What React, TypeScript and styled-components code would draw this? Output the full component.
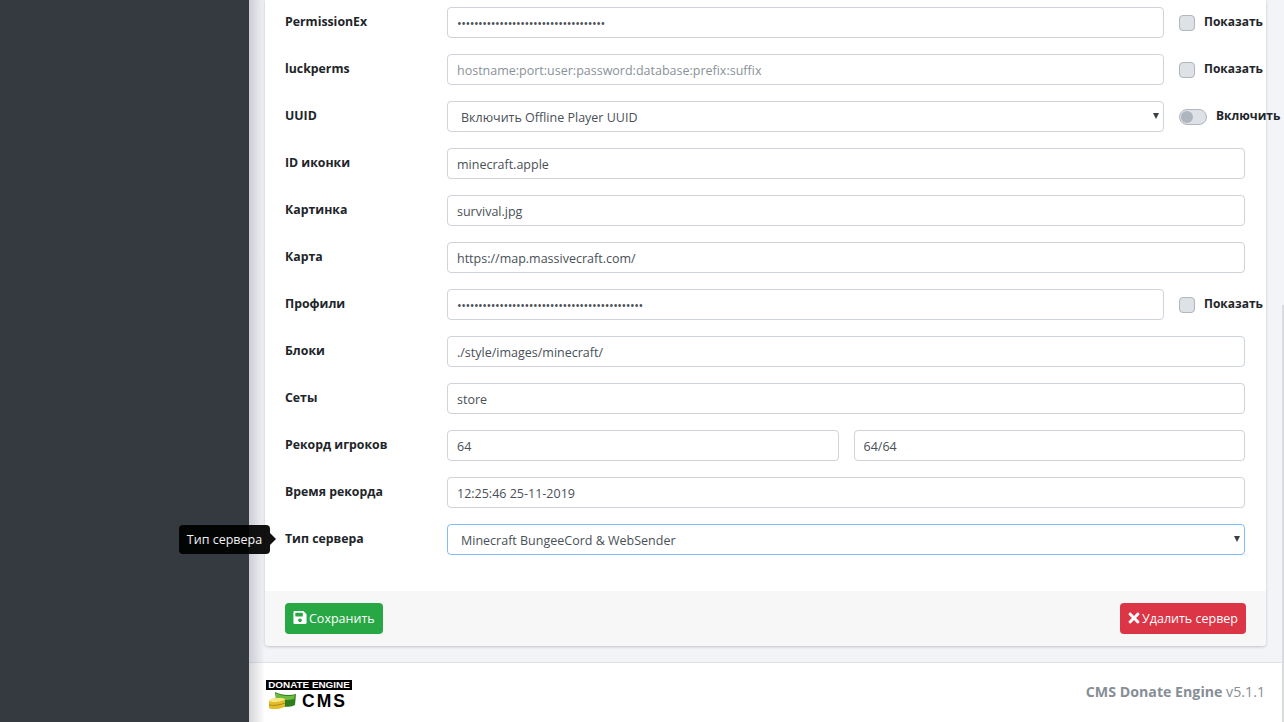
import React from "react";
import styled, { createGlobalStyle } from "styled-components";
import { FaSave, FaTimes } from "react-icons/fa";

const Global = createGlobalStyle`
  html, body { margin: 0; padding: 0; height: 100%; overflow: hidden; background: #f3f4f8; }
  * { box-sizing: border-box; }
  body { font-family: "Open Sans", "Noto Sans", sans-serif; font-size: 13px; color: #212529; }
`;

const Shell = styled.div`
  display: flex;
  width: 1284px;
  height: 722px;
  overflow: hidden;
  position: relative;
`;
const Sidebar = styled.aside`
  width: 249px;
  flex: none;
  background: #343a40;
`;
const Main = styled.main`
  flex: 1;
  min-width: 0;
  display: flex;
  flex-direction: column;
  position: relative;
  &::before {
    content: "";
    position: absolute;
    left: 0;
    top: 0;
    bottom: 0;
    width: 16px;
    background: linear-gradient(90deg, rgba(120, 125, 135, 0.32), rgba(120, 125, 135, 0));
    pointer-events: none;
    z-index: 1;
  }
`;
const ScrollThumb = styled.div`
  position: absolute;
  right: 0;
  top: 305px;
  bottom: 0;
  width: 2px;
  background: #d9dbe0;
  z-index: 2;
`;
const Content = styled.div`
  flex: 1;
  padding: 0 18px 16px 16px;
`;
const Card = styled.section`
  height: 646px;
  background: #fff;
  border-radius: 0 0 4px 4px;
  box-shadow: 0 1px 3px rgba(60, 65, 80, 0.28);
  display: flex;
  flex-direction: column;
`;
const CardBody = styled.div`
  flex: 1;
  padding: 7px 21px 0 20px;
  display: flex;
  flex-direction: column;
  gap: 16px;
`;
const Row = styled.div`
  display: flex;
  height: 31px;
  align-items: flex-start;
`;
const Label = styled.label`
  position: relative;
  width: 162px;
  flex: none;
  font-weight: 700;
  font-size: 12.3px;
  line-height: 18px;
  padding-top: 6px;
  color: #212529;
`;
const Fields = styled.div`
  flex: 1;
  min-width: 0;
  display: flex;
  gap: 15px;
`;
const Input = styled.input`
  flex: 1;
  min-width: 0;
  height: 31px;
  padding: 2px 9px 0;
  border: 1px solid #ced4da;
  border-radius: 4px;
  background: #fff;
  color: #495057;
  font-family: inherit;
  font-size: 12.5px;
  outline: none;
  &::placeholder { color: #8a9299; opacity: 1; }
  &[type="password"] { letter-spacing: -0.48px; }
`;
const SelectWrap = styled.div`
  flex: 1;
  min-width: 0;
  display: flex;
  position: relative;
  &::after {
    content: "";
    position: absolute;
    right: 5px;
    top: 12px;
    border-top: 6px solid #3a3f44;
    border-left: 3px solid transparent;
    border-right: 3px solid transparent;
    pointer-events: none;
  }
`;
const Select = styled.select<{ $focused?: boolean }>`
  flex: 1;
  min-width: 0;
  height: 31px;
  padding: 2px 20px 0 13px;
  border: 1px solid ${(p) => (p.$focused ? "#80bdff" : "#ced4da")};
  border-radius: 4px;
  background: #fff;
  color: #495057;
  font-family: inherit;
  font-size: 12.5px;
  outline: none;
  appearance: none;
`;
const Side = styled.div`
  width: 81px;
  flex: none;
  padding-left: 15px;
  height: 31px;
  display: flex;
  align-items: center;
  white-space: nowrap;
  font-weight: 700;
  font-size: 12px;
  color: #212529;
`;
const CheckBox = styled.span`
  width: 16px;
  height: 16px;
  flex: none;
  margin-right: 9px;
  border: 1px solid #adb5bd;
  border-radius: 4px;
  background: #dee2e6;
`;
const SideText = styled.span`
  margin-top: -3px;
`;
const Switch = styled.span`
  width: 28px;
  height: 16px;
  flex: none;
  margin-right: 9px;
  margin-top: 1px;
  border: 1px solid #adb5bd;
  border-radius: 8px;
  background: #dee2e6;
  padding: 1px;
`;
const Knob = styled.span`
  display: block;
  width: 12px;
  height: 12px;
  border-radius: 50%;
  background: #adb5bd;
`;
const Tooltip = styled.div`
  position: absolute;
  right: calc(100% + 15px);
  top: 1px;
  height: 29px;
  width: 91px;
  display: flex;
  align-items: center;
  justify-content: center;
  background: #000;
  border-radius: 4px;
  color: #fff;
  font-weight: 400;
  font-size: 12.5px;
  white-space: nowrap;
  opacity: 0.93;
  z-index: 3;
  &::after {
    content: "";
    position: absolute;
    left: 100%;
    top: 8px;
    border-left: 6px solid #000;
    border-top: 6px solid transparent;
    border-bottom: 6px solid transparent;
  }
`;
const CardFooter = styled.div`
  height: 55px;
  flex: none;
  padding: 12px 20px 0;
  background: #f7f7f7;
  border-radius: 0 0 4px 4px;
  display: flex;
  justify-content: space-between;
  align-items: flex-start;
`;
const Button = styled.button<{ $tone: string }>`
  height: 31px;
  display: inline-flex;
  align-items: center;
  gap: 2px;
  padding: 0 8px;
  border: 0;
  border-radius: 4px;
  background: ${(p) => p.$tone};
  color: #fff;
  font-family: inherit;
  font-size: 12.5px;
`;
const SaveIcon = styled(FaSave)`
  width: 14px;
  height: 15px;
  margin-top: -2px;
`;
const CloseIcon = styled(FaTimes)`
  width: 12px;
  height: 16px;
  margin-top: -2px;
`;
const Footer = styled.footer`
  height: 60px;
  flex: none;
  background: #fff;
  border-top: 1px solid #dfe1e6;
  padding: 0 19px 0 17px;
  display: flex;
  justify-content: space-between;
  align-items: center;
`;
const Logo = styled.div`
  width: 88px;
  margin-top: 4px;
  display: flex;
  flex-direction: column;
`;
const LogoBar = styled.div`
  height: 10px;
  width: 86px;
  background: #000;
  color: #fff;
  font-family: "Liberation Sans", sans-serif;
  font-weight: 700;
  font-size: 9.9px;
  line-height: 10px;
  text-align: center;
  white-space: nowrap;
`;
const LogoRow = styled.div`
  display: flex;
  align-items: flex-start;
  margin-top: 2px;
  padding-left: 3px;
`;
const LogoText = styled.span`
  font-family: "Liberation Sans", sans-serif;
  font-weight: 700;
  font-size: 17.5px;
  line-height: 18px;
  letter-spacing: 2px;
  color: #000;
  margin-left: 6px;
`;
const Credit = styled.div`
  color: #868e96;
  font-size: 14.2px;
  margin-top: -2px;
  strong { font-weight: 700; }
`;

const MoneyIcon = () => (
  <svg width="27" height="17" viewBox="0 0 27 17" aria-hidden="true">
    <path d="M6 0 C12 3 20 4 27 2 L26 13 C20 16 14 14 8 15 Z" fill="#2f7d1e" />
    <path d="M7 1 C12 4 20 5 26 3 L25 7 C19 9 12 8 7 6 Z" fill="#6dbb3f" />
    <path d="M0 9 C2 6 12 5 16 7 L16 14 C14 17 3 18 0 16 Z" fill="#e4bd2b" />
    <path d="M0 9 C2 6 12 5 16 7 C13 10 3 11 0 9 Z" fill="#f7e684" />
    <path d="M0 13 C5 14 11 13 16 11" stroke="#a08012" strokeWidth="0.8" fill="none" />
  </svg>
);

type Field = {
  label: string;
  value?: string;
  placeholder?: string;
  password?: boolean;
  show?: boolean;
};

const before: Field[] = [
  { label: "PermissionEx", value: "x".repeat(35), password: true, show: true },
  { label: "luckperms", placeholder: "hostname:port:user:password:database:prefix:suffix", show: true },
];
const middle: Field[] = [
  { label: "ID иконки", value: "minecraft.apple" },
  { label: "Картинка", value: "survival.jpg" },
  { label: "Карта", value: "https://map.massivecraft.com/" },
  { label: "Профили", value: "x".repeat(44), password: true, show: true },
  { label: "Блоки", value: "./style/images/minecraft/" },
  { label: "Сеты", value: "store" },
];

const FieldRow = ({ f }: { f: Field }) => (
  <Row>
    <Label>{f.label}</Label>
    <Fields>
      <Input
        type={f.password ? "password" : "text"}
        defaultValue={f.value}
        placeholder={f.placeholder}
        readOnly
      />
    </Fields>
    {f.show && (
      <Side>
        <CheckBox />
        <SideText>Показать</SideText>
      </Side>
    )}
  </Row>
);

export default function App() {
  return (
    <Shell>
      <Global />
      <Sidebar />
      <Main>
        <Content>
          <Card>
            <CardBody>
              {before.map((f) => (
                <FieldRow key={f.label} f={f} />
              ))}
              <Row>
                <Label>UUID</Label>
                <Fields>
                  <SelectWrap>
                    <Select defaultValue="off">
                      <option value="off">Включить Offline Player UUID</option>
                    </Select>
                  </SelectWrap>
                </Fields>
                <Side>
                  <Switch>
                    <Knob />
                  </Switch>
                  <SideText>Включить</SideText>
                </Side>
              </Row>
              {middle.map((f) => (
                <FieldRow key={f.label} f={f} />
              ))}
              <Row>
                <Label>Рекорд игроков</Label>
                <Fields>
                  <Input defaultValue="64" readOnly />
                  <Input defaultValue="64/64" readOnly />
                </Fields>
              </Row>
              <FieldRow f={{ label: "Время рекорда", value: "12:25:46 25-11-2019" }} />
              <Row>
                <Label>
                  Тип сервера
                  <Tooltip>Тип сервера</Tooltip>
                </Label>
                <Fields>
                  <SelectWrap>
                    <Select $focused defaultValue="bungee">
                      <option value="bungee">Minecraft BungeeCord &amp; WebSender</option>
                    </Select>
                  </SelectWrap>
                </Fields>
              </Row>
            </CardBody>
            <CardFooter>
              <Button $tone="#28a745">
                <SaveIcon />
                Сохранить
              </Button>
              <Button $tone="#dc3545">
                <CloseIcon />
                Удалить сервер
              </Button>
            </CardFooter>
          </Card>
        </Content>
        <Footer>
          <Logo>
            <LogoBar>DONATE ENGINE</LogoBar>
            <LogoRow>
              <MoneyIcon />
              <LogoText>CMS</LogoText>
            </LogoRow>
          </Logo>
          <Credit>
            <strong>CMS Donate Engine</strong> v5.1.1
          </Credit>
        </Footer>
        <ScrollThumb />
      </Main>
    </Shell>
  );
}
